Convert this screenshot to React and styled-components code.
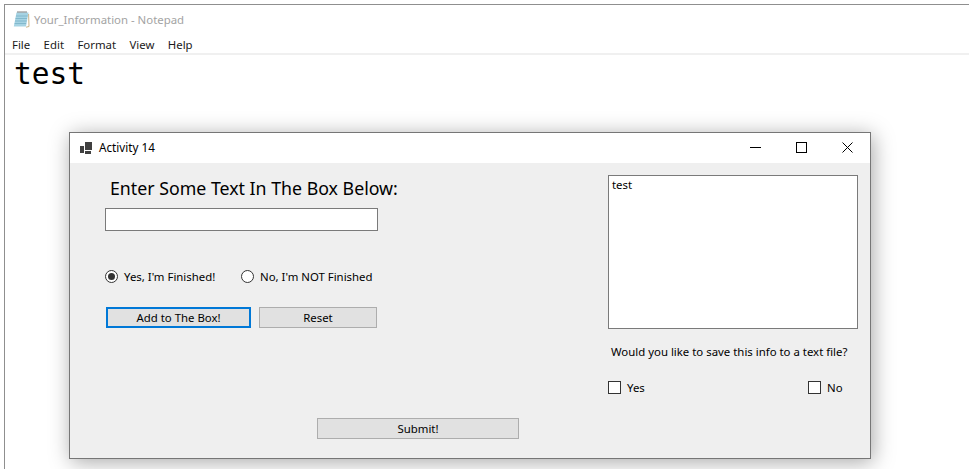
import React from "react";
import styled, { createGlobalStyle } from "styled-components";

const GlobalStyle = createGlobalStyle`
  html, body {
    margin: 0;
    padding: 0;
    background: #fff;
    overflow: hidden;
  }
  #root {
    width: 969px;
    height: 469px;
  }
`;

const uiFont = `"Noto Sans", "Open Sans", sans-serif`;

const Desktop = styled.div`
  position: relative;
  width: 969px;
  height: 469px;
  padding: 4px 0 0 4px;
  box-sizing: border-box;
  background: #fff;
  overflow: hidden;
  font-family: ${uiFont};
`;

const Notepad = styled.div`
  height: 465px;
  border-top: 1px solid #8f8f8f;
  border-left: 1px solid #8f8f8f;
  box-sizing: border-box;
`;

const NotepadTitle = styled.div`
  display: flex;
  align-items: center;
  gap: 4px;
  height: 29px;
  padding-left: 8px;
  font-size: 11.4px;
  color: #a3a3a3;
`;

const NotepadMenu = styled.div`
  display: flex;
  gap: 13.4px;
  height: 21px;
  padding: 1px 0 0 7px;
  box-sizing: border-box;
  align-items: center;
  font-size: 11.4px;
  color: #1a1a1a;
  border-bottom: 2px solid #f0f0f0;
`;

const NotepadText = styled.div`
  padding: 1px 0 0 9px;
  font-family: "DejaVu Sans Mono", monospace;
  font-size: 29.5px;
  line-height: 36px;
  color: #000;
`;

const Dialog = styled.div`
  position: absolute;
  left: 69px;
  top: 132px;
  width: 802px;
  height: 327px;
  box-sizing: border-box;
  border: 1px solid #767676;
  background: #efefef;
  box-shadow: 2px 3px 20px rgba(0, 0, 0, 0.35);
  display: flex;
  flex-direction: column;
`;

const TitleBar = styled.div`
  display: flex;
  align-items: flex-start;
  height: 30px;
  background: #fff;
  padding-left: 10px;
  font-size: 11.7px;
  color: #000;
  flex: none;
`;

const AppIconWrap = styled.div`
  height: 29px;
  display: flex;
  align-items: center;
`;

const TitleText = styled.span`
  margin-left: 6px;
  flex: 1;
  line-height: 29px;
`;

const WindowButton = styled.div`
  width: 46px;
  height: 29px;
  display: flex;
  align-items: center;
  justify-content: center;
`;

const Body = styled.div`
  flex: 1;
  display: flex;
  justify-content: space-between;
  padding: 12px 12px 19px 35px;
  min-height: 0;
`;

const LeftColumn = styled.div`
  display: flex;
  flex-direction: column;
  width: 414px;
`;

const Heading = styled.div`
  margin-left: 5px;
  height: 33px;
  font-size: 17.75px;
  line-height: 26px;
  color: #000;
  white-space: nowrap;
`;

const TextInput = styled.div`
  width: 273px;
  height: 23px;
  box-sizing: border-box;
  border: 1px solid #7a7a7a;
  background: #fff;
`;

const RadioRow = styled.div`
  display: flex;
  margin-top: 38px;
  height: 14px;
  align-items: center;
`;

const RadioOption = styled.label`
  display: flex;
  align-items: center;
  gap: 6px;
  width: 136px;
  font-size: 11.4px;
  color: #000;
  white-space: nowrap;
`;

const RadioDot = styled.span`
  width: 13px;
  height: 13px;
  box-sizing: border-box;
  border: 1px solid #333;
  border-radius: 50%;
  background: #fff;
  display: flex;
  align-items: center;
  justify-content: center;
  flex: none;
  &::after {
    content: "";
    display: ${(p) => (p.$checked ? "block" : "none")};
    width: 7px;
    height: 7px;
    border-radius: 50%;
    background: #333;
  }
`;

const ButtonRow = styled.div`
  display: flex;
  gap: 8px;
  margin: 24px 0 0 1px;
`;

const FormButton = styled.div`
  width: ${(p) => p.$width}px;
  height: 21px;
  box-sizing: border-box;
  background: #e1e1e1;
  border: ${(p) => (p.$focused ? "2px solid #0078d7" : "1px solid #adadad")};
  display: flex;
  align-items: center;
  justify-content: center;
  font-size: 11.4px;
  color: #000;
`;

const SubmitWrap = styled.div`
  margin: auto 0 0 212px;
`;

const RightColumn = styled.div`
  width: 250px;
  display: flex;
  flex-direction: column;
`;

const OutputBox = styled.div`
  height: 154px;
  box-sizing: border-box;
  border: 1px solid #7a7a7a;
  background: #fff;
  padding: 1px 3px;
  font-size: 11.4px;
  line-height: 16px;
  color: #000;
`;

const Question = styled.div`
  margin: 14px 0 0 3px;
  font-size: 11.4px;
  line-height: 17px;
  color: #000;
  white-space: nowrap;
`;

const CheckRow = styled.div`
  display: flex;
  margin-top: 20px;
  align-items: center;
`;

const CheckOption = styled.label`
  display: flex;
  align-items: center;
  gap: 6px;
  flex: none;
  width: ${(p) => p.$width}px;
  font-size: 11.4px;
  color: #000;
`;

const CheckBox = styled.span`
  width: 13px;
  height: 13px;
  box-sizing: border-box;
  border: 1px solid #333;
  background: #fff;
  flex: none;
`;

function NotepadIcon() {
  return (
    <svg width="17" height="17" viewBox="0 0 17 17">
      <path d="M3.5 1.5h12l-2.5 14H0.8z" fill="#a6d3e3" />
      <path d="M3 5h11.5M2.5 7.5h11.5M2 10h11.5M1.6 12.5h11.5" stroke="#79b2c8" strokeWidth="0.8" />
      <path d="M4.5 1h10" stroke="#555" strokeWidth="1.6" strokeDasharray="1 1" />
      <path d="M15.6 3l.4 12.5-3 .7" fill="none" stroke="#c9b48a" strokeWidth="1" />
    </svg>
  );
}

function AppIcon() {
  return (
    <svg width="13" height="12" viewBox="0 0 13 12" fill="#404040">
      <rect x="0" y="4" width="4" height="7" />
      <rect x="5" y="0" width="7" height="8" />
      <rect x="5" y="9" width="6" height="3" />
    </svg>
  );
}

export default function App() {
  return (
    <Desktop>
      <GlobalStyle />
      <Notepad>
        <NotepadTitle>
          <NotepadIcon />
          <span>Your_Information - Notepad</span>
        </NotepadTitle>
        <NotepadMenu>
          <span>File</span>
          <span>Edit</span>
          <span>Format</span>
          <span>View</span>
          <span>Help</span>
        </NotepadMenu>
        <NotepadText>test</NotepadText>
      </Notepad>

      <Dialog>
        <TitleBar>
          <AppIconWrap>
            <AppIcon />
          </AppIconWrap>
          <TitleText>Activity 14</TitleText>
          <WindowButton>
            <svg width="11" height="11" viewBox="0 0 11 11">
              <path d="M0 5.5h11" stroke="#000" />
            </svg>
          </WindowButton>
          <WindowButton>
            <svg width="11" height="11" viewBox="0 0 11 11">
              <rect x="0.5" y="0.5" width="10" height="10" fill="none" stroke="#000" />
            </svg>
          </WindowButton>
          <WindowButton>
            <svg width="11" height="11" viewBox="0 0 11 11">
              <path d="M0.5 0.5l10 10M10.5 0.5l-10 10" stroke="#000" />
            </svg>
          </WindowButton>
        </TitleBar>

        <Body>
          <LeftColumn>
            <Heading>Enter Some Text In The Box Below:</Heading>
            <TextInput />
            <RadioRow>
              <RadioOption>
                <RadioDot $checked />
                Yes, I'm Finished!
              </RadioOption>
              <RadioOption>
                <RadioDot />
                No, I'm NOT Finished
              </RadioOption>
            </RadioRow>
            <ButtonRow>
              <FormButton $width={145} $focused>Add to The Box!</FormButton>
              <FormButton $width={118}>Reset</FormButton>
            </ButtonRow>
            <SubmitWrap>
              <FormButton $width={202}>Submit!</FormButton>
            </SubmitWrap>
          </LeftColumn>

          <RightColumn>
            <OutputBox>test</OutputBox>
            <Question>Would you like to save this info to a text file?</Question>
            <CheckRow>
              <CheckOption $width={200}>
                <CheckBox />
                Yes
              </CheckOption>
              <CheckOption $width={50}>
                <CheckBox />
                No
              </CheckOption>
            </CheckRow>
          </RightColumn>
        </Body>
      </Dialog>
    </Desktop>
  );
}
